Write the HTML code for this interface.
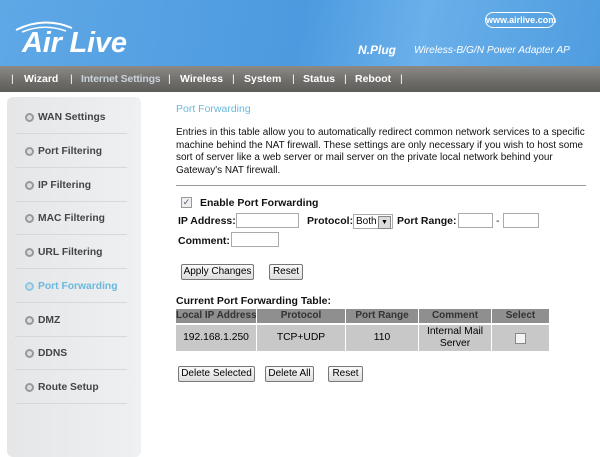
<!DOCTYPE html><html><head><style>
body{margin:0;width:600px;height:442px;overflow:hidden;background:#fff;font-family:"Liberation Sans",Arial,sans-serif;position:relative}
.a{position:absolute;white-space:nowrap}
.hdr{left:0;top:0;width:600px;height:66px;background:linear-gradient(100deg,#5fa8e6 0%,#4d9ae0 50%,#6ab0ea 70%,#4f9cdf 100%)}
.nav{left:0;top:66px;width:600px;height:26px;background:linear-gradient(#8c8a87,#6e6c69 60%,#5f5d5a);color:#fff;font-size:10.5px;font-weight:bold}
.nav span{position:absolute;top:7px}
.side{left:7px;top:97px;width:134px;height:360px;background:linear-gradient(90deg,#e4e6e8,#eef0f2);border-radius:6px}
.mi{position:absolute;left:8px;width:112px;height:33px;border-bottom:1px solid #d6d8da;font-size:10.3px;font-weight:bold;color:#444;white-space:nowrap}
.mi i{position:absolute;left:10px;top:13px;width:5px;height:5px;border:2px solid #999;border-radius:50%;background:#ddd}
.mi b{position:absolute;left:23px;top:12px}
.t{font-size:10.5px;color:#111}
.in{position:absolute;height:15px;border:1px solid #aaa;background:#fff;box-sizing:border-box}
.btn{position:absolute;height:14px;border:1px solid #777;border-radius:2px;background:linear-gradient(#fafafa,#dcdcdc);font-size:10px;text-align:center;line-height:13px;white-space:nowrap;overflow:hidden}
.th{position:absolute;top:309px;height:14px;background:#8f8f8f;color:#333;font-size:10px;font-weight:bold;text-align:center;line-height:14px;white-space:nowrap;overflow:hidden}
.td{position:absolute;top:325px;height:26px;background:#c8c8c8;font-size:10.3px;text-align:center;display:flex;align-items:center;justify-content:center;line-height:12px}
</style></head><body>
<div class="a hdr">
<svg class="a" style="left:14px;top:18px" width="60" height="16"><path d="M2 12 Q30 -2 58 10" stroke="#fff" stroke-width="2" fill="none"/><path d="M8 14 Q30 5 52 13" stroke="#fff" stroke-width="1.5" fill="none"/></svg>
<div class="a" style="left:22px;top:27px;color:#fff;font:italic bold 29px 'Liberation Sans',sans-serif;letter-spacing:-0.2px">Air Live</div>
<div class="a" style="left:485px;top:12px;width:68px;height:14px;border:1.5px solid #fff;border-radius:8px;color:#fff;font-size:9px;font-weight:bold;text-align:center;line-height:14px">www.airlive.com</div>
<div class="a" style="left:358px;top:43px;color:#fff;font:italic bold 12px 'Liberation Sans',sans-serif">N.Plug</div>
<div class="a" style="left:414px;top:45px;color:#fff;font:italic 10.2px 'Liberation Sans',sans-serif">Wireless-B/G/N Power Adapter AP</div>
</div>
<div class="a nav">
<span style="left:11px;font-weight:normal">|</span><span style="left:24px">Wizard</span><span style="left:70px;font-weight:normal">|</span><span style="left:81px;color:#c8d2dc;letter-spacing:-0.2px;font-size:10.5px">Internet Settings</span><span style="left:168px;font-weight:normal">|</span><span style="left:180px">Wireless</span><span style="left:232px;font-weight:normal">|</span><span style="left:244px">System</span><span style="left:292px;font-weight:normal">|</span><span style="left:303px">Status</span><span style="left:344px;font-weight:normal">|</span><span style="left:355px">Reboot</span><span style="left:400px;font-weight:normal">|</span>
</div>
<div class="a side">
<div class="mi" style="top:3px"><i></i><b>WAN Settings</b></div>
<div class="mi" style="top:37px"><i></i><b>Port Filtering</b></div>
<div class="mi" style="top:71px"><i></i><b>IP Filtering</b></div>
<div class="mi" style="top:104px"><i></i><b>MAC Filtering</b></div>
<div class="mi" style="top:138px"><i></i><b>URL Filtering</b></div>
<div class="mi" style="top:172px;color:#6ab8dc"><i style="border-color:#8cc8e4"></i><b>Port Forwarding</b></div>
<div class="mi" style="top:206px"><i></i><b>DMZ</b></div>
<div class="mi" style="top:239px"><i></i><b>DDNS</b></div>
<div class="mi" style="top:273px"><i></i><b>Route Setup</b></div>
</div>
<div class="a" style="left:176px;top:103px;font-size:10.5px;color:#6ab8dc">Port Forwarding</div>
<div class="a t" style="left:176px;top:127px;line-height:12.6px;font-size:9.95px">Entries in this table allow you to automatically redirect common network services to a specific<br>machine behind the NAT firewall. These settings are only necessary if you wish to host some<br>sort of server like a web server or mail server on the private local network behind your<br>Gateway's NAT firewall.</div>
<div class="a" style="left:176px;top:185px;width:410px;height:1px;background:#999"></div>
<div class="a" style="left:181px;top:197px;width:9px;height:9px;border:1px solid #999;background:#eee;font-size:9px;line-height:9px;text-align:center;color:#557">✓</div>
<div class="a t" style="left:200px;top:197px;font-weight:bold">Enable Port Forwarding</div>
<div class="a t" style="left:178px;top:215px;font-weight:bold">IP Address:</div>
<div class="in" style="left:236px;top:213px;width:63px"></div>
<div class="a t" style="left:307px;top:215px;font-weight:bold">Protocol:</div>
<div class="in" style="left:353px;top:214px;width:40px;font-size:10px;padding-left:2px;line-height:13px">Both<span style="position:absolute;right:1px;top:1px;width:11px;height:11px;background:#ddd;border:1px solid #888;font-size:7px;text-align:center;line-height:11px">▼</span></div>
<div class="a t" style="left:397px;top:215px;font-weight:bold">Port Range:</div>
<div class="in" style="left:458px;top:213px;width:35px"></div>
<div class="a t" style="left:496px;top:215px">-</div>
<div class="in" style="left:503px;top:213px;width:36px"></div>
<div class="a t" style="left:178px;top:235px;font-weight:bold">Comment:</div>
<div class="in" style="left:231px;top:232px;width:48px"></div>
<div class="btn" style="left:181px;top:264px;width:71px">Apply Changes</div>
<div class="btn" style="left:269px;top:264px;width:32px">Reset</div>
<div class="a t" style="left:176px;top:295px;font-weight:bold">Current Port Forwarding Table:</div>
<div class="th" style="left:176px;width:80px">Local IP Address</div>
<div class="th" style="left:257px;width:88px">Protocol</div>
<div class="th" style="left:346px;width:72px">Port Range</div>
<div class="th" style="left:419px;width:72px">Comment</div>
<div class="th" style="left:492px;width:57px">Select</div>
<div class="td" style="left:176px;width:80px">192.168.1.250</div>
<div class="td" style="left:257px;width:88px">TCP+UDP</div>
<div class="td" style="left:346px;width:72px">110</div>
<div class="td" style="left:419px;width:72px">Internal Mail<br>Server</div>
<div class="td" style="left:492px;width:57px"><span style="width:9px;height:9px;border:1px solid #888;background:#f4f4f4"></span></div>
<div class="btn" style="left:178px;top:366px;width:75px">Delete Selected</div>
<div class="btn" style="left:265px;top:366px;width:47px">Delete All</div>
<div class="btn" style="left:328px;top:366px;width:33px">Reset</div>
</body></html>
